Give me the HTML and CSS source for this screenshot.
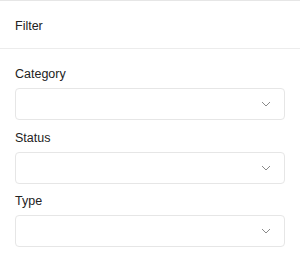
FILE: index.html
```html
<!DOCTYPE html>
<html lang="en">
<head>
  <meta charset="UTF-8" />
  <title>Filter</title>
  <meta name="viewport" content="width=device-width, initial-scale=1.0" />
  <link rel="stylesheet" href="styles.css">
</head>
<body>

  <div class="panel">
    <div class="panel-header">Filter</div>

    <div class="panel-body">
      <div class="field">
        <label>Category</label>
        <div class="select">
          <svg width="10" height="6" viewBox="0 0 10 6"><path d="M1 1l4 4 4-4" fill="none" stroke="#8a8a8a" stroke-width="1"/></svg>
        </div>
      </div>

      <div class="field">
        <label>Status</label>
        <div class="select">
          <svg width="10" height="6" viewBox="0 0 10 6"><path d="M1 1l4 4 4-4" fill="none" stroke="#8a8a8a" stroke-width="1"/></svg>
        </div>
      </div>

      <div class="field">
        <label>Type</label>
        <div class="select">
          <svg width="10" height="6" viewBox="0 0 10 6"><path d="M1 1l4 4 4-4" fill="none" stroke="#8a8a8a" stroke-width="1"/></svg>
        </div>
      </div>
    </div>
  </div>

</body>
</html>
```

FILE: styles.css
```css
* { box-sizing: border-box; margin: 0; padding: 0; }

body {
  font-family: 'Liberation Sans', 'Inter', sans-serif;
  background-color: #fff;
  color: #222;
}

.panel {
  border-top: 1px solid #e6e6e6;
}

.panel-header {
  height: 48px;
  padding: 3px 15px 0;
  display: flex;
  align-items: center;
  font-size: 12.5px;
  border-bottom: 1px solid #ececec;
}

.panel-body {
  padding: 15px 15px;
  display: flex;
  flex-direction: column;
  gap: 7.5px;
}

.field label {
  display: block;
  font-size: 12.5px;
  line-height: 20px;
  margin-bottom: 4px;
}

.select {
  height: 32px;
  border: 1px solid #e6e6e6;
  border-radius: 4px;
  display: flex;
  align-items: center;
  justify-content: flex-end;
  padding-right: 13px;
}
```
